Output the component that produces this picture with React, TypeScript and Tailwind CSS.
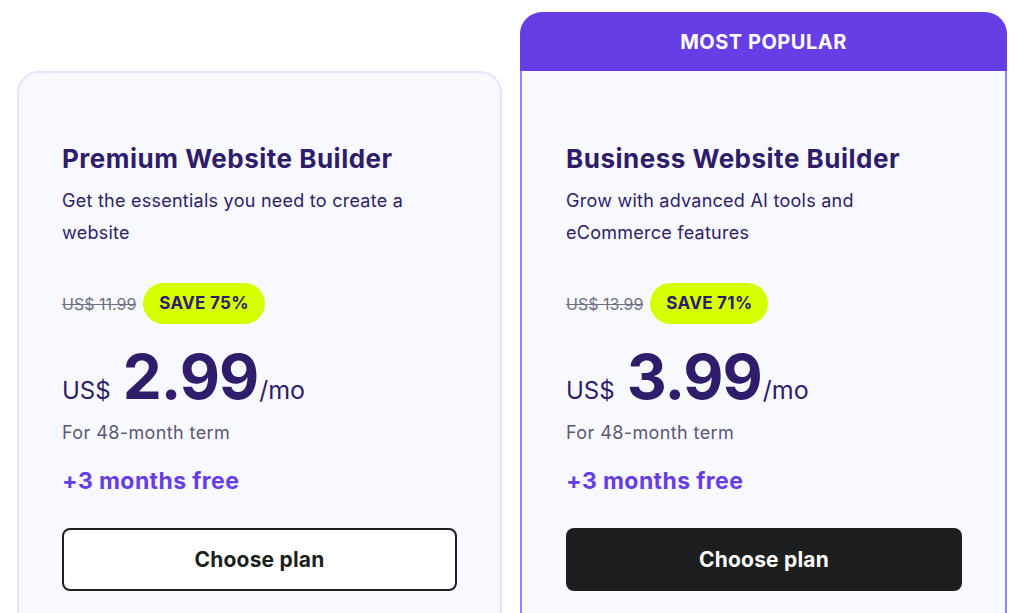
const PLANS = [
  {
    name: 'Premium Website Builder',
    desc: 'Get the essentials you need to create a website',
    old: 'US$ 11.99',
    save: 'SAVE 75%',
    price: '2.99',
    popular: false,
  },
  {
    name: 'Business Website Builder',
    desc: 'Grow with advanced AI tools and eCommerce features',
    old: 'US$ 13.99',
    save: 'SAVE 71%',
    price: '3.99',
    popular: true,
  },
]

type Plan = (typeof PLANS)[number]

function PlanBody({ plan }: { plan: Plan }) {
  return (
    <div className={'pr-[43px] ' + (plan.popular ? 'pl-[44px] pt-[72px]' : 'pl-[43px] pt-[70px]')}>
      <h3 className="text-[26px] leading-[32px] font-bold tracking-[0.5px] text-[#2f1c6a]">{plan.name}</h3>
      <p className="mt-[10px] max-w-[370px] text-[18px] leading-[32px] tracking-[0.25px] text-[#2f1c6a]">
        {plan.desc}
      </p>

      <div className="mt-[34px] flex items-center gap-[7px]">
        <span className="text-[16px] text-[#6d7081] line-through">{plan.old}</span>
        <span className="h-[41px] px-[16px] rounded-full bg-[#d5ff01] flex items-center text-[17px] font-bold tracking-[0.3px] text-[#2f1c6a]">
          {plan.save}
        </span>
      </div>

      <div className="mt-[17px] flex items-baseline text-[#2f1c6a]">
        <span className="text-[24px] mr-[12px]">US$</span>
        <span className="text-[62px] leading-[72px] font-bold tracking-[-1px]">{plan.price}</span>
        <span className="text-[25px] ml-[1px]">/mo</span>
      </div>

      <p className="mt-[6px] text-[18px] leading-[28px] tracking-[0.4px] text-[#5b5675]">For 48-month term</p>
      <p className="mt-[18px] text-[23px] leading-[32px] font-bold tracking-[0.4px] text-[#673de6]">
        +3 months free
      </p>

      <button
        className={
          'mt-[31px] w-full h-[63px] rounded-[8px] text-[21px] font-bold tracking-[0.2px] ' +
          (plan.popular
            ? 'bg-[#1d1e20] text-white'
            : 'border-2 border-[#1d1e20] text-[#1d1e20] bg-white')
        }
      >
        Choose plan
      </button>
    </div>
  )
}

export default function App() {
  return (
    <div
      className="h-[613px] w-[1024px] overflow-hidden bg-white"
      style={{ fontFamily: 'Inter, "Noto Sans", sans-serif' }}
    >
      <div className="flex items-start gap-[18px] pl-[17px] pt-[12px]">
        <div className="mt-[59px] w-[485px] h-[640px] rounded-[22px] border-2 border-[#e3e5fc] bg-[#f8f9ff]">
          <PlanBody plan={PLANS[0]} />
        </div>

        <div className="w-[487px] h-[700px] rounded-[22px] bg-[#673de6] flex flex-col">
          <div className="h-[59px] flex items-center justify-center text-white text-[20px] font-bold tracking-[0.5px]">
            MOST POPULAR
          </div>
          <div className="flex-1 border-2 border-t-0 border-[#8c85ff] bg-[#f8f9ff]">
            <PlanBody plan={PLANS[1]} />
          </div>
        </div>
      </div>
    </div>
  )
}
